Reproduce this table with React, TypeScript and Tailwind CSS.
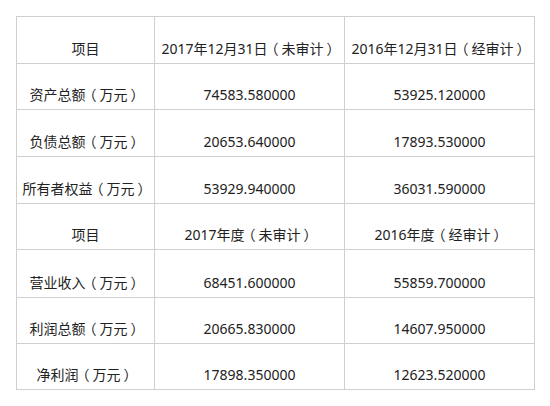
import React from "react";

const rows = [
  { h: "h-[47px]", cells: ["项目", "2017年12月31日（未审计）", "2016年12月31日（经审计）"] },
  { h: "h-[46px]", cells: ["资产总额（万元）", "74583.580000", "53925.120000"] },
  { h: "h-[47px]", cells: ["负债总额（万元）", "20653.640000", "17893.530000"] },
  { h: "h-[47px]", cells: ["所有者权益（万元）", "53929.940000", "36031.590000"] },
  { h: "h-[46px]", cells: ["项目", "2017年度（未审计）", "2016年度（经审计）"] },
  { h: "h-[48px]", cells: ["营业收入（万元）", "68451.600000", "55859.700000"] },
  { h: "h-[46px]", cells: ["利润总额（万元）", "20665.830000", "14607.950000"] },
  { h: "h-[46px]", cells: ["净利润（万元）", "17898.350000", "12623.520000"] },
];

// the reference font centres full-width bracket ink; nudge it with letter-spacing
function Label({ text }: { text: string }) {
  const chars = Array.from(text);
  return (
    <>
      {chars.map((ch, i) => {
        const next = chars[i + 1];
        if (next === "（" || ch === "）") {
          return (
            <span key={i} className="tracking-[-3px]">
              {ch}
            </span>
          );
        }
        if (ch === "（" || next === "）") {
          return (
            <span key={i} className="tracking-[3px]">
              {ch}
            </span>
          );
        }
        return <React.Fragment key={i}>{ch}</React.Fragment>;
      })}
    </>
  );
}

export default function App() {
  return (
    <div className="w-[550px] h-[406px] bg-white p-4 font-['Noto_Sans','Noto_Sans_CJK_SC',sans-serif] text-[14px] text-[#222]">
      <div className="grid w-[519px] grid-cols-[138px_190px_190px] border-l border-t border-[#cfcfcf]">
        {rows.map((row, i) => (
          <React.Fragment key={i}>
            {row.cells.map((c, j) => (
              <div
                key={j}
                className={`${row.h} flex items-end justify-center border-r border-b border-[#cfcfcf] pb-[4px] leading-[20px] whitespace-nowrap`}
              >
                <span>
                  <Label text={c} />
                </span>
              </div>
            ))}
          </React.Fragment>
        ))}
      </div>
    </div>
  );
}
